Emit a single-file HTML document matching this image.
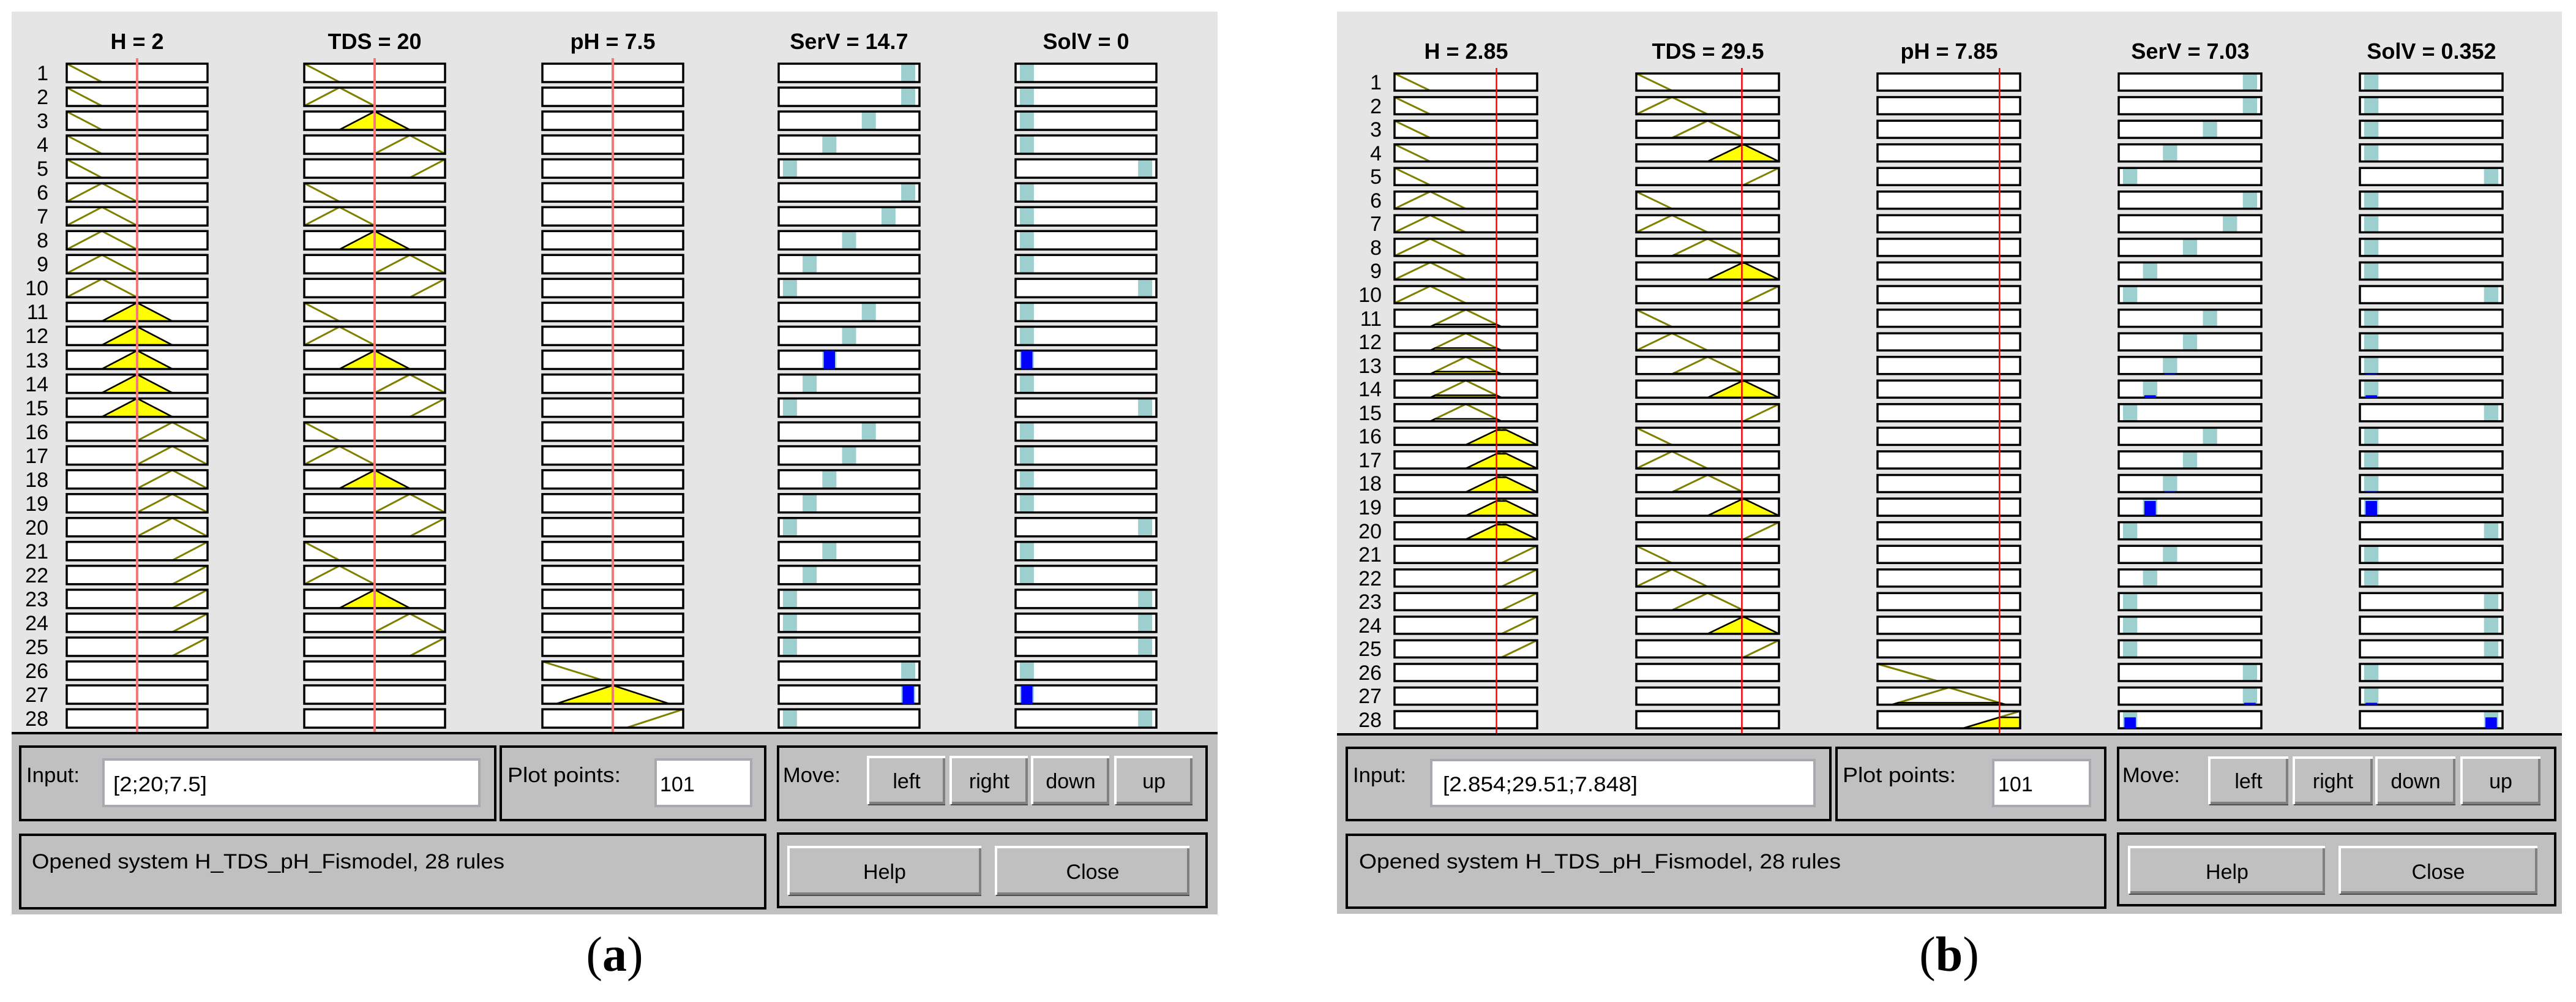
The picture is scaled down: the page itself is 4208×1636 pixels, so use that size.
<!DOCTYPE html>
<html><head><meta charset="utf-8">
<style>
html,body{margin:0;padding:0;background:#fff;}
svg{display:block;}
text{font-family:"Liberation Sans",Arial,sans-serif;fill:#000;}
.t{font-size:36px;font-weight:bold;text-anchor:middle;}
.n{font-size:34px;text-anchor:end;}
.l{font-size:34px;}
.c{font-size:34px;text-anchor:middle;}
.cap{font-family:"Liberation Serif",serif;font-size:80px;text-anchor:middle;}
.fr{fill:none;stroke:#000;stroke-width:4;}
.fld{fill:#fff;stroke:#a8a8b0;stroke-width:4;}
</style></head>
<body>
<svg id="s" xmlns="http://www.w3.org/2000/svg" width="4208" height="1636" viewBox="0 0 4208 1636">
<rect x="0" y="0" width="4208" height="1636" fill="#fff"/>
<!-- panel a -->
<rect x="19" y="19" width="1970" height="1474" fill="#e5e5e5"/>
<rect x="19" y="1197" width="1970" height="296" fill="#c0c0c0"/>
<!-- panel b -->
<rect x="2184" y="19" width="2001" height="1473" fill="#e5e5e5"/>
<rect x="2184" y="1199" width="2001" height="293" fill="#c0c0c0"/>
<g id="g"></g>
<line x1="19" y1="1197" x2="1989" y2="1197" stroke="#000" stroke-width="4"/>
<line x1="2184" y1="1199" x2="4185" y2="1199" stroke="#000" stroke-width="4"/>

<!-- titles a -->
<text class="t" x="224" y="80">H = 2</text>
<text class="t" x="612" y="80">TDS = 20</text>
<text class="t" x="1001" y="80">pH = 7.5</text>
<text class="t" x="1387" y="80">SerV = 14.7</text>
<text class="t" x="1774" y="80">SolV = 0</text>
<!-- titles b -->
<text class="t" x="2395" y="96">H = 2.85</text>
<text class="t" x="2790" y="96">TDS = 29.5</text>
<text class="t" x="3184" y="96">pH = 7.85</text>
<text class="t" x="3578" y="96">SerV = 7.03</text>
<text class="t" x="3972" y="96">SolV = 0.352</text>

<!-- row numbers a -->
<g class="n">
<text class="n" x="79" y="131">1</text><text class="n" x="79" y="170">2</text><text class="n" x="79" y="209">3</text><text class="n" x="79" y="248">4</text><text class="n" x="79" y="287">5</text><text class="n" x="79" y="326">6</text><text class="n" x="79" y="365">7</text><text class="n" x="79" y="404">8</text><text class="n" x="79" y="443">9</text><text class="n" x="79" y="482">10</text><text class="n" x="79" y="521">11</text><text class="n" x="79" y="560">12</text><text class="n" x="79" y="600">13</text><text class="n" x="79" y="639">14</text><text class="n" x="79" y="678">15</text><text class="n" x="79" y="717">16</text><text class="n" x="79" y="756">17</text><text class="n" x="79" y="795">18</text><text class="n" x="79" y="834">19</text><text class="n" x="79" y="873">20</text><text class="n" x="79" y="912">21</text><text class="n" x="79" y="951">22</text><text class="n" x="79" y="990">23</text><text class="n" x="79" y="1029">24</text><text class="n" x="79" y="1068">25</text><text class="n" x="79" y="1107">26</text><text class="n" x="79" y="1146">27</text><text class="n" x="79" y="1185">28</text>
</g>
<!-- row numbers b -->
<g>
<text class="n" x="2257" y="146">1</text><text class="n" x="2257" y="185">2</text><text class="n" x="2257" y="223">3</text><text class="n" x="2257" y="262">4</text><text class="n" x="2257" y="300">5</text><text class="n" x="2257" y="339">6</text><text class="n" x="2257" y="377">7</text><text class="n" x="2257" y="416">8</text><text class="n" x="2257" y="454">9</text><text class="n" x="2257" y="493">10</text><text class="n" x="2257" y="532">11</text><text class="n" x="2257" y="570">12</text><text class="n" x="2257" y="609">13</text><text class="n" x="2257" y="647">14</text><text class="n" x="2257" y="686">15</text><text class="n" x="2257" y="724">16</text><text class="n" x="2257" y="763">17</text><text class="n" x="2257" y="801">18</text><text class="n" x="2257" y="840">19</text><text class="n" x="2257" y="879">20</text><text class="n" x="2257" y="917">21</text><text class="n" x="2257" y="956">22</text><text class="n" x="2257" y="994">23</text><text class="n" x="2257" y="1033">24</text><text class="n" x="2257" y="1071">25</text><text class="n" x="2257" y="1110">26</text><text class="n" x="2257" y="1148">27</text><text class="n" x="2257" y="1187">28</text>
</g>

<!-- bottom a -->
<rect class="fr" x="33" y="1219" width="776" height="120"/>
<rect class="fld" x="169" y="1240" width="614" height="76"/>
<text class="l" x="43" y="1277" textLength="87" lengthAdjust="spacingAndGlyphs">Input:</text>
<text class="l" x="185" y="1292" textLength="153" lengthAdjust="spacingAndGlyphs">[2;20;7.5]</text>
<rect class="fr" x="818" y="1219" width="432" height="120"/>
<rect class="fld" x="1071" y="1240" width="156" height="76"/>
<text class="l" x="829" y="1277" textLength="185" lengthAdjust="spacingAndGlyphs">Plot points:</text>
<text class="l" x="1078" y="1292">101</text>
<rect class="fr" x="1271" y="1219" width="700" height="120"/>
<text class="l" x="1279" y="1277" textLength="94" lengthAdjust="spacingAndGlyphs">Move:</text>
<rect class="fr" x="33" y="1363" width="1217" height="120"/>
<text class="l" x="52" y="1418" textLength="772" lengthAdjust="spacingAndGlyphs">Opened system H_TDS_pH_Fismodel, 28 rules</text>
<rect class="fr" x="1271" y="1361" width="700" height="120"/>
<g id="btnA"></g>
<text class="c" x="1481" y="1287">left</text>
<text class="c" x="1616" y="1287">right</text>
<text class="c" x="1749" y="1287">down</text>
<text class="c" x="1885" y="1287">up</text>
<text class="c" x="1445" y="1435">Help</text>
<text class="c" x="1785" y="1435">Close</text>
<text class="cap" x="1004" y="1585">(<tspan font-weight="bold">a</tspan>)</text>

<!-- bottom b -->
<rect class="fr" x="2200" y="1221" width="790" height="118"/>
<rect class="fld" x="2338" y="1241" width="626" height="75"/>
<text class="l" x="2210" y="1277" textLength="87" lengthAdjust="spacingAndGlyphs">Input:</text>
<text class="l" x="2357" y="1292" textLength="318" lengthAdjust="spacingAndGlyphs">[2.854;29.51;7.848]</text>
<rect class="fr" x="3000" y="1221" width="439" height="118"/>
<rect class="fld" x="3256" y="1241" width="158" height="75"/>
<text class="l" x="3010" y="1277" textLength="185" lengthAdjust="spacingAndGlyphs">Plot points:</text>
<text class="l" x="3264" y="1292">101</text>
<rect class="fr" x="3460" y="1221" width="714" height="118"/>
<text class="l" x="3467" y="1277" textLength="94" lengthAdjust="spacingAndGlyphs">Move:</text>
<rect class="fr" x="2200" y="1363" width="1239" height="119"/>
<text class="l" x="2220" y="1418" textLength="787" lengthAdjust="spacingAndGlyphs">Opened system H_TDS_pH_Fismodel, 28 rules</text>
<rect class="fr" x="3460" y="1361" width="714" height="117"/>
<g id="btnB"></g>
<text class="c" x="3673" y="1287">left</text>
<text class="c" x="3811" y="1287">right</text>
<text class="c" x="3946" y="1287">down</text>
<text class="c" x="4085" y="1287">up</text>
<text class="c" x="3638" y="1435">Help</text>
<text class="c" x="3983" y="1435">Close</text>
<text class="cap" x="3184" y="1585">(<tspan font-weight="bold">b</tspan>)</text>
</svg>
<script>
(function(){
var NS="http://www.w3.org/2000/svg";
function el(parent,tag,attrs){var e=document.createElementNS(NS,tag);for(var k in attrs)e.setAttribute(k,attrs[k]);parent.appendChild(e);return e;}
var g=document.getElementById("g");
var HT=[[[0,1],[.25,0]],[[0,0],[.25,1],[.5,0]],[[.25,0],[.5,1],[.75,0]],[[.5,0],[.75,1],[1,0]],[[.75,0],[1,1]]];
var PH=[[[0,1],[.42,0]],[[.1,0],[.5,1],[.9,0]],[[.6,0],[1,1]]];
function mu(p,x){if(x<=p[0][0])return p[0][1];var L=p[p.length-1];if(x>=L[0])return L[1];
 for(var i=0;i<p.length-1;i++){var a=p[i],b=p[i+1];if(x>=a[0]&&x<=b[0]){return a[1]+(b[1]-a[1])*(x-a[0])/(b[0]-a[0]);}}return 0;}
var SERV=[6,6,4,2,0,6,5,3,1,0,4,3,2,1,0,4,3,2,1,0,2,1,0,0,0,6,6,0];
var SOLV=[0,0,0,0,6,0,0,0,0,6,0,0,0,0,6,0,0,0,0,6,0,0,6,6,6,0,0,6];
var P=[{x0:[109,497,886,1272,1659],w:230,top:104,pitch:39.04,h:30,inp:[.5,.5,.5],red:"#f47878",rw:4,rt:95,rb:1197},
       {x0:[2278,2673,3067,3461,3855],w:233,top:120,pitch:38.56,h:28,inp:[.715,.74,.855],red:"#ff0000",rw:2.5,rt:111,rb:1199}];
P.forEach(function(pn){
 for(var r=0;r<28;r++){
  var y=pn.top+r*pn.pitch, h=pn.h;
  var mfs=[null,null,null];
  if(r<25){mfs[0]=HT[Math.floor(r/5)];mfs[1]=HT[r%5];}else{mfs[2]=PH[r-25];}
  var levels=[0,0,0];
  for(var c=0;c<5;c++){
   var x0=pn.x0[c],w=pn.w;
   el(g,"rect",{x:x0,y:y,width:w,height:h,fill:"#fff"});
   if(c<3&&mfs[c]){
    var p=mfs[c];
    var pts=p.map(function(q){return (x0+q[0]*w).toFixed(1)+","+(y+h-q[1]*h).toFixed(1);}).join(" ");
    el(g,"polyline",{points:pts,fill:"none",stroke:"#808000","stroke-width":3});
    var lv=mu(p,pn.inp[c]);levels[c]=lv;
    if(lv>0.001){
     var a=[];for(var i=0;i<=200;i++){var x=i/200;var m=Math.min(mu(p,x),lv);a.push((x0+x*w).toFixed(1)+","+(y+h-m*h).toFixed(1));}
     a.push((x0+w)+","+(y+h));a.push(x0+","+(y+h));
     el(g,"polygon",{points:a.join(" "),fill:"#ffff00",stroke:"#000","stroke-width":2.5,"stroke-linejoin":"round"});
    }
   }
   if(c>=3){
    var k=(c==3?SERV:SOLV)[r];
    var bx=x0+w*(0.03+0.14*k);
    el(g,"rect",{x:bx,y:y,width:w*0.1,height:h,fill:"#9dcfcf"});
   }
   el(g,"rect",{x:x0,y:y,width:w,height:h,fill:"none",stroke:"#000","stroke-width":3.5});
  }
  var s = r<25 ? Math.min(levels[0],levels[1]) : levels[2];
  if(s>0.001){
   for(var c2=3;c2<5;c2++){
    var k2=(c2==3?SERV:SOLV)[r];var x02=pn.x0[c2],w2=pn.w;
    var bw=w2*0.08,bx2=x02+w2*(0.03+0.14*k2)+w2*0.01;
    el(g,"rect",{x:bx2,y:y+h-s*h,width:bw,height:s*h,fill:"#0000ff"});
   }
  }
 }
 for(var c3=0;c3<3;c3++){
  var xr=pn.x0[c3]+pn.w*pn.inp[c3];
  el(g,"line",{x1:xr,y1:pn.rt,x2:xr,y2:pn.rb,stroke:pn.red,"stroke-width":pn.rw});
 }
});
function btn(parent,x,y,w,h){
 el(parent,"rect",{x:x,y:y,width:w,height:h,fill:"#c0c0c0"});
 el(parent,"polyline",{points:x+","+(y+h)+" "+x+","+y+" "+(x+w)+","+y,fill:"none",stroke:"#fff","stroke-width":4});
 el(parent,"polyline",{points:(x+2)+","+(y+h-2)+" "+(x+w-2)+","+(y+h-2)+" "+(x+w-2)+","+(y+2),fill:"none",stroke:"#808080","stroke-width":4});
 el(parent,"line",{x1:x,y1:y+h+1,x2:x+w,y2:y+h+1,stroke:"#505050","stroke-width":2});
}
var A=document.getElementById("btnA"),B=document.getElementById("btnB");
[[1418,1236,126,77],[1553,1236,126,77],[1686,1236,126,77],[1822,1236,126,77],[1288,1383,315,78],[1627,1383,316,78]].forEach(function(b){btn(A,b[0],b[1],b[2],b[3]);});
[[3609,1237,129,76],[3747,1237,129,76],[3882,1237,129,76],[4021,1237,129,76],[3478,1383,320,76],[3822,1383,323,76]].forEach(function(b){btn(B,b[0],b[1],b[2],b[3]);});
})();
</script>
</body></html>
